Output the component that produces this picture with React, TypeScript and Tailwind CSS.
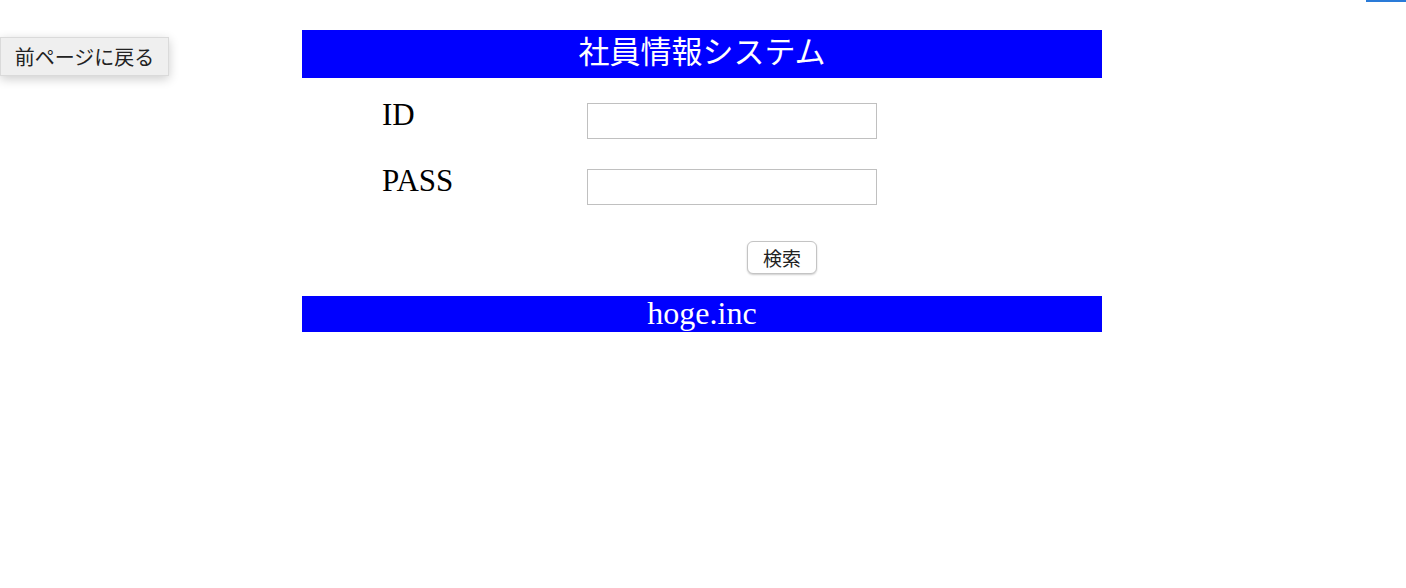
import React from 'react'

const serif = { fontFamily: '"Liberation Serif", "Noto Sans CJK JP", serif' }

const App = () => {
  return (
    <div className='relative min-h-[588px] bg-white'>
      <div className='absolute right-0 top-0 h-[2px] w-[40px] bg-[#2a7bd8]' />
      <button
        className='absolute left-0 top-[37px] h-[39px] w-[169px] border border-[#dadada] bg-[#efefef] text-[20px] text-[#222] shadow-[0_3px_10px_rgba(0,0,0,0.2)]'
        style={{ fontFamily: '"Noto Sans CJK JP", sans-serif' }}
      >
        前ページに戻る
      </button>

      <div className='mx-auto w-[800px] pt-[30px] -translate-x-[1px]' style={serif}>
        <div className='h-12 bg-[#0000ff] text-center text-[31px] leading-[46px] text-white'>
          社員情報システム
        </div>

        <div className='mt-[22px] flex items-start'>
          <label className='-mt-[2px] ml-[80px] w-[205px] text-[31px] leading-[34px] text-black'>ID</label>
          <input className='mt-[3px] h-[36px] w-[290px] border border-[#c0c0c0] outline-none' />
        </div>
        <div className='mt-[27px] flex items-start'>
          <label className='-mt-[2px] ml-[80px] w-[205px] text-[31px] leading-[34px] text-black'>PASS</label>
          <input type='password' className='mt-[3px] h-[36px] w-[290px] border border-[#c0c0c0] outline-none' />
        </div>

        <div className='mt-[36px] flex'>
          <button
            className='ml-[445px] h-[33px] w-[70px] rounded-[6px] border border-[#c4c4c4] bg-white text-[19px] leading-none text-[#222] shadow-[0_1px_2px_rgba(0,0,0,0.2)]'
            style={{ fontFamily: '"Noto Sans CJK JP", sans-serif' }}
          >
            検索
          </button>
        </div>

        <div className='mt-[22px] h-[36px] bg-[#0000ff] text-center text-[32px] leading-[35px] text-white'>
          hoge.inc
        </div>
      </div>
    </div>
  )
}

export default App
